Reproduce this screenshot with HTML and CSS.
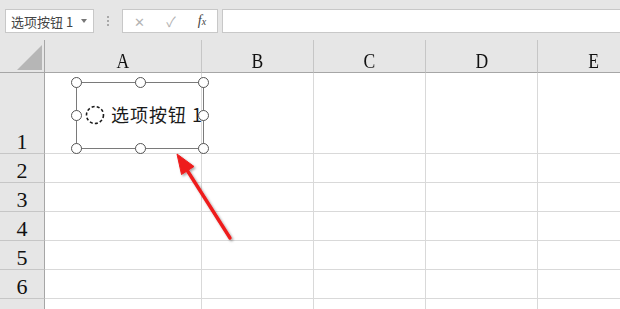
FILE: index.html
```html
<!DOCTYPE html>
<html lang="zh-CN">
<head>
    <meta charset="UTF-8">
    <meta name="viewport" content="width=device-width, initial-scale=1.0">
    <title>选项按钮 1</title>
    <link rel="stylesheet" href="styles.css">
</head>
<body>
    <div class="toolbar">
        <div class="name-box">
            <span>选项按钮 1</span>
            <span class="caret"></span>
        </div>
        <div class="dots"><i></i><i></i><i></i></div>
        <div class="fx-box">
            <span class="fx-btn">✕</span>
            <span class="fx-btn check">✓</span>
            <span class="fx-btn fx"><i>f</i><small>x</small></span>
        </div>
        <div class="formula-input"></div>
    </div>

    <div class="sheet">
        <div class="grid">
            <div class="cell corner"><div class="corner-tri"></div></div>
            <div class="cell col-head"><span>A</span></div>
            <div class="cell col-head"><span>B</span></div>
            <div class="cell col-head"><span>C</span></div>
            <div class="cell col-head"><span>D</span></div>
            <div class="cell col-head"><span>E</span></div>

            <div class="cell row-head">1</div>
            <div class="cell"></div><div class="cell"></div><div class="cell"></div><div class="cell"></div><div class="cell"></div>

            <div class="cell row-head">2</div>
            <div class="cell"></div><div class="cell"></div><div class="cell"></div><div class="cell"></div><div class="cell"></div>

            <div class="cell row-head">3</div>
            <div class="cell"></div><div class="cell"></div><div class="cell"></div><div class="cell"></div><div class="cell"></div>

            <div class="cell row-head">4</div>
            <div class="cell"></div><div class="cell"></div><div class="cell"></div><div class="cell"></div><div class="cell"></div>

            <div class="cell row-head">5</div>
            <div class="cell"></div><div class="cell"></div><div class="cell"></div><div class="cell"></div><div class="cell"></div>

            <div class="cell row-head">6</div>
            <div class="cell"></div><div class="cell"></div><div class="cell"></div><div class="cell"></div><div class="cell"></div>

            <div class="cell row-head">7</div>
            <div class="cell"></div><div class="cell"></div><div class="cell"></div><div class="cell"></div><div class="cell"></div>
        </div>

        <!-- selected form control -->
        <div class="option-control">
            <svg class="radio" width="20" height="20" viewBox="0 0 20 20">
                <circle cx="10" cy="10" r="8.5" fill="none" stroke="#1a1a1a" stroke-width="1.6" stroke-dasharray="3 2.2"/>
            </svg>
            <span class="option-label">选项按钮 1</span>
            <span class="handle h-tl"></span>
            <span class="handle h-tc"></span>
            <span class="handle h-tr"></span>
            <span class="handle h-ml"></span>
            <span class="handle h-mr"></span>
            <span class="handle h-bl"></span>
            <span class="handle h-bc"></span>
            <span class="handle h-br"></span>
        </div>
    </div>

    <!-- annotation arrow -->
    <svg class="arrow" width="620" height="309" viewBox="0 0 620 309">
        <defs>
            <filter id="shadow" x="-20%" y="-20%" width="140%" height="140%">
                <feDropShadow dx="1.5" dy="1.5" stdDeviation="1.2" flood-color="#000" flood-opacity="0.35"/>
            </filter>
        </defs>
        <g filter="url(#shadow)" fill="#ee1c1c" stroke="#ee1c1c">
            <line x1="230" y1="238" x2="187" y2="170" stroke-width="3.4" stroke-linecap="round"/>
            <polygon points="177,154 194,166.5 181.5,174.5" stroke-width="1" stroke-linejoin="round"/>
        </g>
    </svg>
</body>
</html>
```

FILE: styles.css
```css
body {
    margin: 0;
    width: 620px;
    height: 309px;
    overflow: hidden;
    position: relative;
    background-color: #fff;
    font-family: "Noto Sans CJK SC", "Noto Sans", sans-serif;
}
.toolbar {
    height: 40px;
    box-sizing: border-box;
    padding-top: 9px;
    background-color: #e6e6e6;
    display: flex;
    align-items: flex-start;
}
.name-box {
    margin-left: 5px;
    width: 89px;
    height: 24px;
    box-sizing: border-box;
    border: 1px solid #c8c8c8;
    background-color: #fff;
    display: flex;
    align-items: center;
    padding-left: 5px;
    font-size: 13px;
    color: #444;
}
.caret {
    margin-left: auto;
    margin-right: 6px;
    border-left: 3px solid transparent;
    border-right: 3px solid transparent;
    border-top: 4px solid #777;
}
.dots {
    width: 28px;
    height: 24px;
    display: flex;
    flex-direction: column;
    align-items: center;
    justify-content: center;
    gap: 2px;
}
.dots i {
    width: 2px;
    height: 2px;
    background-color: #a8a8a8;
}
.fx-box {
    width: 96px;
    height: 24px;
    box-sizing: border-box;
    border: 1px solid #c8c8c8;
    background-color: #fff;
    display: grid;
    grid-template-columns: 32px 32px 30px;
    align-items: center;
}
.fx-btn {
    text-align: center;
    font-size: 13px;
    color: #b4b4b4;
}
.check {
    font-size: 14px;
}
.fx {
    font-family: "Liberation Serif", serif;
    color: #444;
    font-size: 14px;
}
.fx small {
    font-size: 10px;
    font-style: italic;
}
.formula-input {
    flex: 1;
    margin-left: 4px;
    height: 24px;
    box-sizing: border-box;
    border: 1px solid #c8c8c8;
    border-right: none;
    background-color: #fff;
}
.sheet {
    position: relative;
}
.grid {
    display: grid;
    grid-template-columns: 45px 157px 112px 112px 112px 112px;
    grid-template-rows: 33px 81px repeat(6, 29px);
}
.cell {
    box-sizing: border-box;
    border-right: 1px solid #d9d9d9;
    border-bottom: 1px solid #d9d9d9;
}
.corner,
.col-head,
.row-head {
    background-color: #e6e6e6;
    font-family: "Liberation Serif", serif;
    font-size: 22px;
    line-height: 22px;
    color: #111;
    display: flex;
    justify-content: center;
    align-items: flex-end;
}
.col-head {
    border-right-color: #c6c6c6;
    border-bottom-color: #a6a6a6;
}
.col-head span {
    display: inline-block;
    transform: scaleX(0.8);
}
.row-head {
    border-right-color: #a6a6a6;
    border-bottom-color: #c6c6c6;
}
.corner {
    border-right-color: #a6a6a6;
    border-bottom-color: #a6a6a6;
    position: relative;
}
.corner-tri {
    position: absolute;
    left: 17px;
    top: 5px;
    width: 25px;
    height: 25px;
    background-color: #b6b6b6;
    clip-path: polygon(100% 0, 100% 100%, 0 100%);
}
.option-control {
    position: absolute;
    left: 76px;
    top: 42px;
    width: 128px;
    height: 67px;
    box-sizing: border-box;
    border: 1px solid #7a7a7a;
    display: flex;
    align-items: center;
    white-space: nowrap;
}
.radio {
    margin-left: 8px;
    margin-top: -2px;
}
.option-label {
    margin-left: 6px;
    margin-top: -3px;
    font-size: 18px;
    letter-spacing: 1px;
    color: #1a1a1a;
}
.handle {
    position: absolute;
    width: 11px;
    height: 11px;
    box-sizing: border-box;
    border: 1.3px solid #555;
    border-radius: 50%;
    background-color: #fff;
}
.h-tl, .h-tc, .h-tr { top: -6px; }
.h-ml, .h-mr { top: calc(50% - 5.5px); }
.h-bl, .h-bc, .h-br { bottom: -6px; }
.h-tl, .h-ml, .h-bl { left: -6px; }
.h-tc, .h-bc { left: calc(50% - 5.5px); }
.h-tr, .h-mr, .h-br { right: -6px; }
.arrow {
    position: absolute;
    left: 0;
    top: 0;
    pointer-events: none;
}
```
